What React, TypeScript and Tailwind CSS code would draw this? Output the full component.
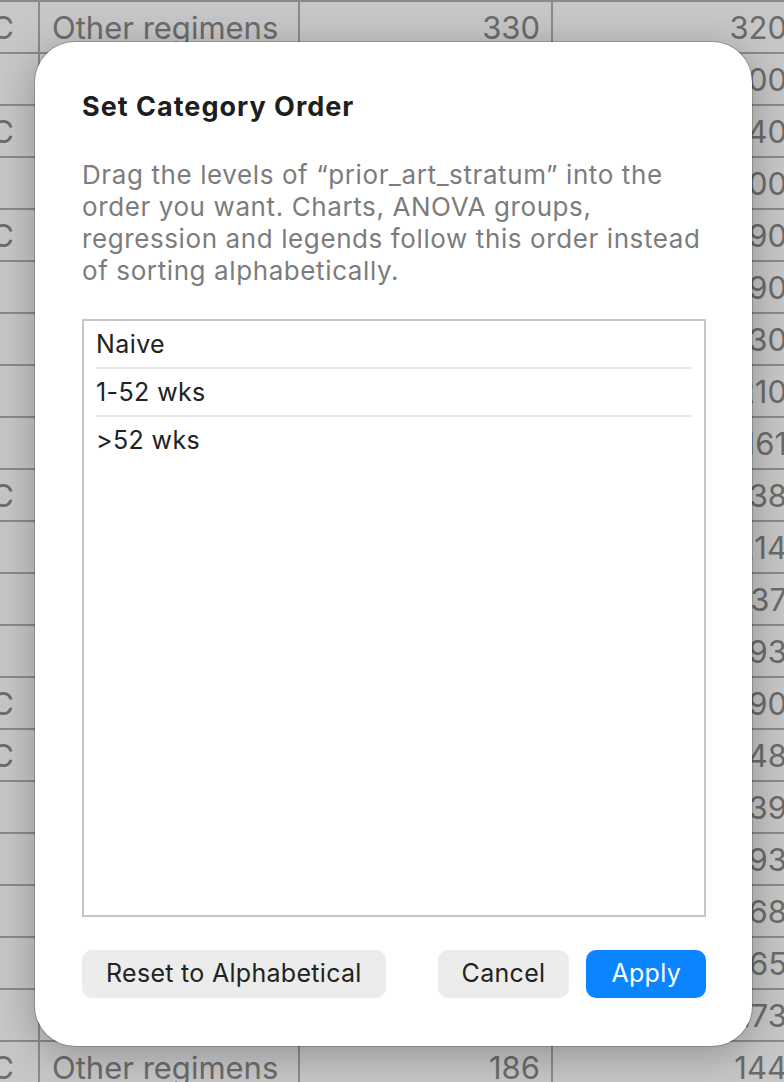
import { useState } from "react";

type Row = { code: string; regimen: string; a: string; b: string };

const rows: Row[] = [
  { code: "FTC/3TC", regimen: "Other regimens", a: "330", b: "320" },
  { code: "", regimen: "TDF/FTC/EFV", a: "412", b: "400" },
  { code: "FTC/3TC", regimen: "ABC/3TC/DTG", a: "256", b: "240" },
  { code: "", regimen: "TDF/3TC/DTG", a: "318", b: "300" },
  { code: "FTC/3TC", regimen: "Other regimens", a: "204", b: "190" },
  { code: "", regimen: "AZT/3TC/NVP", a: "301", b: "290" },
  { code: "", regimen: "TDF/FTC/EFV", a: "145", b: "130" },
  { code: "", regimen: "ABC/3TC/DTG", a: "222", b: "210" },
  { code: "", regimen: "TDF/3TC/DTG", a: "178", b: "161" },
  { code: "FTC/3TC", regimen: "Other regimens", a: "250", b: "238" },
  { code: "", regimen: "AZT/3TC/NVP", a: "226", b: "214" },
  { code: "", regimen: "TDF/FTC/EFV", a: "149", b: "137" },
  { code: "", regimen: "ABC/3TC/DTG", a: "207", b: "193" },
  { code: "FTC/3TC", regimen: "TDF/3TC/DTG", a: "302", b: "290" },
  { code: "FTC/3TC", regimen: "Other regimens", a: "161", b: "148" },
  { code: "", regimen: "AZT/3TC/NVP", a: "150", b: "139" },
  { code: "", regimen: "TDF/FTC/EFV", a: "205", b: "193" },
  { code: "", regimen: "ABC/3TC/DTG", a: "181", b: "168" },
  { code: "", regimen: "TDF/3TC/DTG", a: "277", b: "265" },
  { code: "", regimen: "AZT/3TC/NVP", a: "188", b: "173" },
  { code: "FTC/3TC", regimen: "Other regimens", a: "186", b: "144" },
];

const initialLevels = ["Naive", "1-52 wks", ">52 wks"];

const Sheet = () => (
  <div className="border-t-2 border-[#b3b3b3] bg-white text-[31px] text-[#8a8a8a]">
    {rows.map((r, i) => (
      <div key={i} className="flex h-[52px] border-b-2 border-[#b3b3b3]">
        <div className="flex w-[40px] shrink-0 items-center justify-end overflow-hidden border-r-2 border-[#b3b3b3] pr-[24px] pt-[2px]">
          <span className="whitespace-nowrap">{r.code}</span>
        </div>
        <div className="flex w-[260px] shrink-0 items-center overflow-hidden border-r-2 border-[#b3b3b3] pl-[12px] pt-[2px]">
          <span className="whitespace-nowrap">{r.regimen}</span>
        </div>
        <div className="flex w-[253px] shrink-0 items-center justify-end border-r-2 border-[#b3b3b3] pr-[11px] pt-[2px]">
          {r.a}
        </div>
        <div className="flex w-[234px] shrink-0 items-center justify-end pt-[2px]">
          {r.b}
        </div>
      </div>
    ))}
  </div>
);

const CategoryOrderDialog = () => {
  const [levels, setLevels] = useState(initialLevels);

  return (
    <div className="absolute left-[35px] top-[42px] flex h-[1004px] w-[717px] flex-col rounded-[40px] bg-white pb-[48px] pl-[47px] pr-[46px] pt-[49px] shadow-[0_0_0_1px_rgba(0,0,0,0.18),0_8px_40px_rgba(0,0,0,0.28)]">
      <h1 className="text-[27px] font-bold leading-[32px] tracking-[1px] text-[#1e1e1e]">Set Category Order</h1>
      <p className="mt-[36px] text-[26px] leading-[32px] tracking-[0.6px] text-[#7c7c7c]">
        Drag the levels of “prior_art_stratum” into the order you want. Charts, ANOVA groups,
        regression and legends follow this order instead of sorting alphabetically.
      </p>
      <div className="mt-[32px] flex-1 border-2 border-[#c6c6c6] px-[12px]">
        {levels.map((lvl, i) => (
          <div
            key={lvl}
            className={
              i < levels.length - 1
                ? "flex h-[48px] items-center border-b-2 border-[#e8e8e8] pt-[2px] text-[25px] tracking-[0.4px] text-[#222222]"
                : "flex h-[46px] items-center pt-[2px] text-[25px] tracking-[0.4px] text-[#222222]"
            }
          >
            {lvl}
          </div>
        ))}
      </div>
      <div className="mt-[33px] flex items-center text-[25px] tracking-[0.3px]">
        <button
          type="button"
          onClick={() => setLevels([...initialLevels].sort())}
          className="h-[48px] rounded-[10px] bg-[#ececec] px-[24px] text-[#222222]"
        >
          Reset to Alphabetical
        </button>
        <div className="flex-1" />
        <button type="button" className="h-[48px] rounded-[10px] bg-[#ececec] px-[24px] text-[#222222]">
          Cancel
        </button>
        <button type="button" className="ml-[17px] h-[48px] rounded-[10px] bg-[#0a84ff] px-[25px] text-white">
          Apply
        </button>
      </div>
    </div>
  );
};

const App = () => (
  <div className="relative h-[1082px] w-[784px] overflow-hidden bg-white font-['Inter','Liberation_Sans',sans-serif]">
    <Sheet />
    <div className="absolute inset-0 bg-black/[0.22]" />
    <CategoryOrderDialog />
  </div>
);

export default App;
